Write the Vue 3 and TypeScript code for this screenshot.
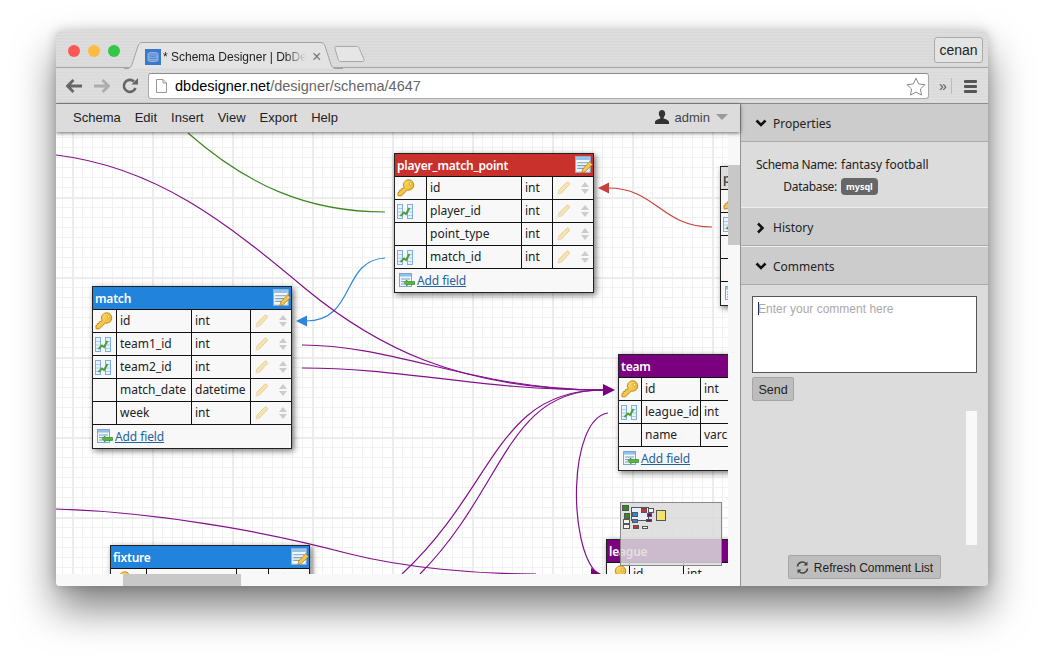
<template>
  <div class="page">
    <svg class="defs" width="0" height="0">
      <defs>
        <linearGradient id="key-fill" x1="0" y1="0" x2="1" y2="1">
          <stop offset="0%" stop-color="#ffe680" />
          <stop offset="100%" stop-color="#eba91c" />
        </linearGradient>
        <symbol id="key" viewBox="0 0 18 18">
          <path
            d="M12 .8a5.200 5.200 0 1 1-1.800 10.200L4.500 16.800H1v-3.200l1.200-.3.2-1.700 1.700-.2.2-1.600 3-.9A5.200 5.200 0 0 1 12 .8z"
            fill="url(#key-fill)"
            stroke="#c48a10"
            stroke-width="1"
          />
          <circle cx="13.500" cy="4.800" r="1.300" fill="#fff3b0" stroke="#c48a10" stroke-width=".6" />
        </symbol>
        <symbol id="fk" viewBox="0 0 16 15">
          <rect x=".5" y=".5" width="5" height="14" fill="#eaf3fd" stroke="#7db0e6" />
          <rect x="10.500" y=".5" width="5" height="14" fill="#eaf3fd" stroke="#7db0e6" />
          <path d="M1 4.500h4M1 8h4M1 11.500h4M11 4.500h4M11 8h4M11 11.500h4" stroke="#a9ccf0" />
          <path d="M3.500 12 7 8.500l2 1.500L12.500 4" fill="none" stroke="#4c9f38" stroke-width="2" />
        </symbol>
        <symbol id="edit" viewBox="0 0 16 16">
          <rect x=".5" y=".5" width="13" height="14" fill="#f2f7fc" stroke="#8fb0d4" />
          <rect x="1" y="1" width="12" height="2.500" fill="#8fc0ea" />
          <path d="M2 6h10M2 8.500h8M2 11h6" stroke="#7f9fbf" />
          <path d="M6 15l1-3.500L13 5l2.500 2.500L9 14z" fill="#f6c64e" stroke="#b07d16" stroke-width=".7" />
        </symbol>
        <symbol id="add" viewBox="0 0 16 15">
          <rect x=".5" y=".5" width="12" height="13" fill="#eef5fc" stroke="#7fa6cf" />
          <rect x="1" y="1" width="11" height="2.500" fill="#8fc0ea" />
          <path d="M2 6h9M2 8.500h4M2 11h4" stroke="#7f9fbf" />
          <path d="M5 9.500 8 7v1.500h7.500v3H8V13z" fill="#55b845" stroke="#2f8a25" stroke-width=".7" />
        </symbol>
        <symbol id="pencil" viewBox="0 0 14 14">
          <path d="M1 13l1-4 7.500-7.500c.8-.6 1.900-.5 2.500.2.600.7.600 1.600 0 2.300L4.500 12z" fill="#f6e4b0" stroke="#e0c88c" stroke-width=".8" />
          <path d="M1 13l1-4 2.500 3z" fill="#efe3cf" />
        </symbol>
      </defs>
    </svg>

    <div class="window">
      <div class="tabstrip">
        <div class="lights">
          <span class="light red"></span>
          <span class="light yellow"></span>
          <span class="light green"></span>
        </div>
        <div class="tab">
          <svg class="tab-shape" width="220" height="27" viewBox="0 0 220 27">
            <path d="M0 26.500h3c3 0 4-1.500 5-4L14 4c1-2.500 2-3.500 5-3.500h177c3 0 4 1 5 3.500l6 18.500c1 2.500 2 4 5 4h7" fill="#e3e3e3" stroke="#a3a3a3" />
          </svg>
          <svg class="favicon" width="16" height="16" viewBox="0 0 16 16">
            <rect width="16" height="16" fill="#3b78c9" />
            <path d="M3 4.500C3 3 13 3 13 4.500v7C13 13 3 13 3 11.500zM3 7c1 1.500 9 1.500 10 0M3 9.500c1 1.500 9 1.500 10 0" fill="#6d9bdb" stroke="#a9c6ee" stroke-width=".7" />
          </svg>
          <span class="tab-title">* Schema Designer | DbDesigner</span>
          <span class="tab-close">×</span>
        </div>
        <svg class="newtab" width="32" height="18" viewBox="0 0 32 18">
          <path d="M1.500 1.500h21c1.500 0 2.200.5 2.800 2L30 14.500c.4 1.200 0 2-1.500 2H7c-1.500 0-2.200-.6-2.800-2L.8 3c-.3-1 0-1.500.7-1.500z" fill="#e6e6e6" stroke="#a8a8a8" />
        </svg>
        <button class="user">cenan</button>
      </div>

      <div class="toolbar">
        <svg class="nav" width="16" height="14" viewBox="0 0 16 14">
          <path d="M7.500 1 1.500 7l6 6M2 7h14" fill="none" stroke="#666" stroke-width="2.800" />
        </svg>
        <svg class="nav" width="16" height="14" viewBox="0 0 16 14">
          <path d="M8.500 1l6 6-6 6M14 7H0" fill="none" stroke="#adadad" stroke-width="2.800" />
        </svg>
        <svg class="nav last" width="16" height="16" viewBox="0 0 16 16">
          <path d="M13.500 10A6 6 0 1 1 12 3.500" fill="none" stroke="#666" stroke-width="2.600" />
          <path d="M9.500 6.500H16V0z" fill="#666" />
        </svg>
        <div class="omnibox">
          <svg width="11" height="14" viewBox="0 0 11 14">
            <path d="M.5.500h6.500l3.500 3.500v9.500H.5zM7 .5V4h3.500" fill="#fff" stroke="#999" />
          </svg>
          <span class="url"><b>dbdesigner.net</b>/designer/schema/4647</span>
          <svg class="star" width="20" height="19" viewBox="0 0 20 19">
            <path d="M10 1.200l2.700 5.700 6.200.8-4.500 4.300 1.100 6.100L10 15.100l-5.500 3 1.100-6.100L1.100 7.700l6.200-.8z" fill="#fff" stroke="#888" />
          </svg>
        </div>
        <span class="more">»</span>
        <span class="divider"></span>
        <span class="burger"><i></i><i></i><i></i></span>
      </div>

      <div class="workspace">
        <div class="designer">
          <div class="menubar">
            <span v-for="item in menu" :key="item">{{ item }}</span>
            <span class="account">
              <svg width="14" height="14" viewBox="0 0 14 14">
                <path d="M7 0c2 0 3.200 1.500 3.200 3.600 0 1.700-.8 3-1.500 3.700v1.300c1.500.7 5.300 1.400 5.300 3.400v2H0v-2c0-2 3.800-2.700 5.300-3.400V7.300C4.600 6.600 3.800 5.300 3.800 3.600 3.800 1.500 5 0 7 0z" fill="#333" />
              </svg>
              admin
              <i class="caret"></i>
            </span>
          </div>

          <div class="viewport">
            <div class="canvas">
              <svg class="edges" width="672" height="442">
                <g fill="none" stroke-width="1.200">
                  <path d="M132 1C190 52 250 80 329 80" stroke="#3c8a1e" />
                  <path d="M656 95C605 95 600 56 552 56" stroke="#c9403a" />
                  <path d="M329 126C285 128 300 189 250 189" stroke="#2f86dc" />
                  <g stroke="#84108c">
                    <path d="M0 23C100 35 170 90 251 158C317 212 400 258 547 258" />
                    <path d="M246 213C340 213 420 258 547 258" />
                    <path d="M246 236C350 236 420 258 547 258" />
                    <path d="M346 442C440 355 440 258 547 258" />
                    <path d="M364 442C450 355 450 258 547 258" />
                    <path d="M552 281C512 287 512 415 541 441" />
                    <path d="M0 377C120 381 230 405 294 422C350 436 420 442 480 442" />
                  </g>
                </g>
                <path d="M240 189l11-5.500v11z" fill="#2f86dc" />
                <path d="M542 56l11-5.500v11z" fill="#c9403a" />
                <path d="M559 258l-12-6v12z" fill="#7b007f" />
                <path d="M545 442l-10-6v12z" fill="#7b007f" />
              </svg>

              <div
                v-for="t in tables"
                :key="t.name"
                class="node"
                :style="{ left: t.x + 'px', top: t.y + 'px', width: t.w + 'px' }"
              >
                <div class="node-head" :style="{ background: t.color, color: t.ink }">
                  <span>{{ t.name }}</span>
                  <svg class="edit-icon" width="18" height="18"><use href="#edit" /></svg>
                </div>
                <div
                  v-for="(f, i) in t.fields"
                  :key="i"
                  class="field"
                  :style="{ gridTemplateColumns: t.cols }"
                >
                  <div class="cell icon-cell">
                    <svg v-if="f.kind === 'key'" width="18" height="18"><use href="#key" /></svg>
                    <svg v-else-if="f.kind === 'fk'" width="16" height="15"><use href="#fk" /></svg>
                  </div>
                  <div class="cell">{{ f.name }}</div>
                  <div class="cell">{{ f.type }}</div>
                  <div class="cell actions">
                    <svg width="14" height="14"><use href="#pencil" /></svg>
                    <span class="updown"><i class="up"></i><i class="down"></i></span>
                  </div>
                </div>
                <div v-if="t.addField" class="add-field">
                  <svg width="16" height="15"><use href="#add" /></svg>
                  <a href="#">Add field</a>
                </div>
              </div>

              <div class="minimap">
                <i
                  v-for="(m, i) in minimap"
                  :key="i"
                  :style="{ left: m[0] + 'px', top: m[1] + 'px', width: m[2] + 'px', height: m[3] + 'px', background: m[4] }"
                ></i>
              </div>
            </div>
            <div class="vscroll"><div class="vthumb"></div></div>
            <div class="hscroll"><div class="hthumb"></div></div>
            <div class="corner"></div>
          </div>
        </div>

        <aside class="panel">
          <div class="panel-head">
            <svg width="12" height="9" viewBox="0 0 12 9"><path d="M1.500 1.500 6 6l4.500-4.500" fill="none" stroke="#111" stroke-width="2.600" /></svg>
            Properties
          </div>
          <div class="props">
            <div class="prop"><span class="prop-key">Schema Name:</span><span>fantasy football</span></div>
            <div class="prop"><span class="prop-key">Database:</span><span class="badge">mysql</span></div>
          </div>
          <div class="panel-head small">
            <svg width="12" height="12" viewBox="0 0 12 12"><path d="M3 1.500 7.500 6 3 10.500" fill="none" stroke="#111" stroke-width="2.600" /></svg>
            History
          </div>
          <div class="panel-head small">
            <svg width="12" height="9" viewBox="0 0 12 9"><path d="M1.500 1.500 6 6l4.500-4.500" fill="none" stroke="#111" stroke-width="2.600" /></svg>
            Comments
          </div>
          <div class="comments">
            <div class="textarea"><i class="text-caret"></i>Enter your comment here</div>
            <button class="btn send">Send</button>
            <div class="comment-list"><div class="comment-scroll"></div></div>
            <button class="btn refresh">
              <svg width="13" height="13" viewBox="0 0 13 13">
                <path d="M1.500 5.500A5 5 0 0 1 10 2.500M11.500 7.500A5 5 0 0 1 3 10.500" fill="none" stroke="#444" stroke-width="1.600" />
                <path d="M11.500 .5v4h-4zM1.500 12.500v-4h4z" fill="#444" />
              </svg>
              Refresh Comment List
            </button>
          </div>
        </aside>
      </div>
    </div>
  </div>
</template>

<script setup lang="ts">
interface Field {
  name: string
  type: string
  kind?: 'key' | 'fk'
}

interface Table {
  name: string
  x: number
  y: number
  w: number
  color: string
  ink: string
  cols: string
  fields: Field[]
  addField: boolean
}

const menu = ['Schema', 'Edit', 'Insert', 'View', 'Export', 'Help']

const BLUE = '#2183dc'
const PURPLE = '#7b007f'
const WHITE = '#fff'

const tables: Table[] = [
  {
    name: 'player',
    x: 664,
    y: 34,
    w: 200,
    color: '#dcdcdc',
    ink: '#444',
    cols: '32px 94px 31px 1fr',
    addField: true,
    fields: [
      { name: '', type: '', kind: 'key' },
      { name: '', type: '', kind: 'fk' },
      { name: '', type: '' },
      { name: '', type: '' }
    ]
  },
  {
    name: 'player_match_point',
    x: 338,
    y: 21,
    w: 200,
    color: '#c9322c',
    ink: WHITE,
    cols: '32px 95px 31px 1fr',
    addField: true,
    fields: [
      { name: 'id', type: 'int', kind: 'key' },
      { name: 'player_id', type: 'int', kind: 'fk' },
      { name: 'point_type', type: 'int' },
      { name: 'match_id', type: 'int', kind: 'fk' }
    ]
  },
  {
    name: 'match',
    x: 36,
    y: 154,
    w: 200,
    color: BLUE,
    ink: WHITE,
    cols: '24px 75px 59px 1fr',
    addField: true,
    fields: [
      { name: 'id', type: 'int', kind: 'key' },
      { name: 'team1_id', type: 'int', kind: 'fk' },
      { name: 'team2_id', type: 'int', kind: 'fk' },
      { name: 'match_date', type: 'datetime' },
      { name: 'week', type: 'int' }
    ]
  },
  {
    name: 'team',
    x: 562,
    y: 222,
    w: 200,
    color: PURPLE,
    ink: WHITE,
    cols: '23px 59px 59px 1fr',
    addField: true,
    fields: [
      { name: 'id', type: 'int', kind: 'key' },
      { name: 'league_id', type: 'int', kind: 'fk' },
      { name: 'name', type: 'varchar' }
    ]
  },
  {
    name: 'league',
    x: 550,
    y: 407,
    w: 200,
    color: PURPLE,
    ink: WHITE,
    cols: '23px 54px 59px 1fr',
    addField: false,
    fields: [{ name: 'id', type: 'int', kind: 'key' }]
  },
  {
    name: 'fixture',
    x: 54,
    y: 413,
    w: 200,
    color: BLUE,
    ink: WHITE,
    cols: '36px 90px 32px 1fr',
    addField: false,
    fields: [{ name: 'id', type: 'int', kind: 'key' }]
  }
]

// left, top, width, height, colour of the small boxes in the overview
const minimap: [number, number, number, number, string][] = [
  [1, 2, 7, 6, '#2e8a1e'],
  [3, 10, 6, 6, '#2e8a1e'],
  [2, 16, 7, 5, '#f4f4f4'],
  [2, 21, 7, 5, '#f4f4f4'],
  [10, 4, 18, 14, '#e8eef8'],
  [11, 9, 6, 5, '#2f86dc'],
  [11, 16, 6, 4, '#2f86dc'],
  [20, 5, 6, 5, '#c9322c'],
  [27, 5, 6, 5, '#f4f4f4'],
  [26, 10, 5, 4, '#7b007f'],
  [25, 16, 6, 3, '#7b007f'],
  [12, 22, 6, 4, '#c9322c'],
  [21, 23, 6, 3, '#f4f4f4'],
  [35, 7, 10, 11, '#f4e46f']
]
</script>

<style>
html,
body {
  margin: 0;
  background: #fff;
}
</style>

<style scoped>
.page {
  width: 1043px;
  height: 666px;
  padding: 31px 55px 0 56px;
  box-sizing: border-box;
  overflow: hidden;
  font-family: "Liberation Sans", Arial, sans-serif;
}

.defs {
  position: absolute;
}

.window {
  width: 932px;
  height: 555px;
  border-radius: 6px 6px 4px 4px;
  overflow: hidden;
  box-shadow: 0 22px 40px rgba(0, 0, 0, 0.5), 0 0 12px rgba(0, 0, 0, 0.2);
  display: flex;
  flex-direction: column;
  background: #ddd;
}

.tabstrip {
  height: 37px;
  flex: none;
  display: flex;
  align-items: flex-end;
  position: relative;
  box-sizing: border-box;
  background: repeating-linear-gradient(180deg, #dedede 0 1px, #d8d8d8 1px 2px, #dbdbdb 2px 3px);
  border-bottom: 1px solid #a3a3a3;
}

.lights {
  display: flex;
  gap: 8px;
  padding: 0 0 10px 12px;
  width: 64px;
  box-sizing: border-box;
}

.light {
  width: 12px;
  height: 12px;
  flex: none;
  border-radius: 50%;
}

.red {
  background: #fc5753;
}

.yellow {
  background: #fdbc40;
}

.green {
  background: #33c748;
}

.tab {
  width: 216px;
  height: 25px;
  margin-left: 10px;
  margin-bottom: -1px;
  padding: 2px 0 0 15px;
  box-sizing: border-box;
  position: relative;
  display: flex;
  align-items: center;
  gap: 2px;
  font-size: 12px;
  color: #222;
}

.tab-shape {
  position: absolute;
  left: -6px;
  top: -1px;
}

.favicon {
  position: relative;
  flex: none;
}

.tab-title {
  position: relative;
  width: 143px;
  overflow: hidden;
  white-space: nowrap;
  -webkit-mask-image: linear-gradient(90deg, #000 85%, transparent);
  mask-image: linear-gradient(90deg, #000 85%, transparent);
}

.tab-close {
  position: relative;
  margin-left: 4px;
  color: #777;
  font-size: 16px;
  line-height: 1;
}

.newtab {
  margin: 0 0 4px -12px;
}

.user {
  margin: 0 5px 4px auto;
  width: 49px;
  height: 26px;
  padding: 0;
  background: #e4e4e4;
  border: 1px solid #aaa;
  border-radius: 3px;
  font: 14px "Liberation Sans", Arial, sans-serif;
  color: #222;
}

.toolbar {
  height: 36px;
  flex: none;
  box-sizing: border-box;
  display: flex;
  align-items: center;
  padding: 1px 11px 0 10px;
  background: repeating-linear-gradient(180deg, #dfdfdf 0 1px, #dadada 1px 2px, #dcdcdc 2px 3px);
  border-bottom: 1px solid #8c8c8c;
}

.nav {
  flex: none;
  margin-right: 12px;
}

.nav.last {
  margin-right: 10px;
}

.omnibox {
  width: 781px;
  height: 26px;
  box-sizing: border-box;
  flex: none;
  display: flex;
  align-items: center;
  gap: 8px;
  padding: 0 2px 0 7px;
  background: #fff;
  border: 1px solid #a9a9a9;
  border-top-color: #8c8c8c;
  border-radius: 3px;
}

.url {
  flex: 1;
  font-size: 14.5px;
  color: #666;
}

.url b {
  font-weight: 400;
  color: #000;
}

.more {
  margin-left: 10px;
  font-size: 14px;
  color: #555;
}

.divider {
  width: 1px;
  height: 16px;
  margin-left: 4px;
  background: #bbb;
}

.burger {
  margin-left: 12px;
  display: flex;
  flex-direction: column;
  gap: 2px;
}

.burger i {
  display: block;
  width: 13px;
  height: 3px;
  background: #555;
  border-radius: 1px;
}

.workspace {
  flex: 1;
  min-height: 0;
  display: flex;
}

.designer {
  width: 684px;
  flex: none;
  display: flex;
  flex-direction: column;
}

.menubar {
  height: 28px;
  flex: none;
  display: flex;
  align-items: center;
  gap: 14px;
  padding: 0 12px 2px 17px;
  box-sizing: border-box;
  background: #dcdcdc;
  font-size: 13px;
  color: #222;
  position: relative;
  z-index: 2;
  box-shadow: 0 1px 4px rgba(0, 0, 0, 0.6);
}

.account {
  margin-left: auto;
  display: flex;
  align-items: center;
  gap: 6px;
  font-size: 13px;
  color: #444;
}

.caret {
  width: 0;
  height: 0;
  border: 6px solid transparent;
  border-top: 6px solid #999;
  border-bottom: 0;
  margin-left: 0;
}

.viewport {
  flex: 1;
  min-height: 0;
  display: grid;
  grid-template-columns: 672px 12px;
  grid-template-rows: 442px 12px;
}

.canvas {
  position: relative;
  overflow: hidden;
  background-color: #fff;
  background-image:
    linear-gradient(#ececec 2px, transparent 2px),
    linear-gradient(90deg, #ececec 2px, transparent 2px),
    linear-gradient(#f1f1f1 1px, transparent 1px),
    linear-gradient(90deg, #f1f1f1 1px, transparent 1px);
  background-size: 80px 80px, 80px 80px, 10px 10px, 10px 10px;
  background-position: 0 65px, 16px 0, 0 5px, 6px 0;
}

.edges {
  position: absolute;
  left: 0;
  top: 0;
  z-index: 1;
}

.node {
  position: absolute;
  z-index: 2;
  box-sizing: border-box;
  border: 1px solid #222;
  background: #f8f8f8;
  box-shadow: 2px 2px 6px rgba(0, 0, 0, 0.55);
  font-family: "Noto Sans", sans-serif;
  font-size: 12px;
  color: #222;
}

.node-head {
  height: 22px;
  display: flex;
  align-items: center;
  justify-content: space-between;
  padding: 0 0 0 2px;
  font-weight: 600;
  letter-spacing: -0.2px;
  white-space: nowrap;
}

.edit-icon {
  flex: none;
}

.field {
  height: 23px;
  box-sizing: border-box;
  display: grid;
  border-top: 1px solid #111;
}

.cell {
  box-sizing: border-box;
  border-right: 1px solid #111;
  padding-left: 3px;
  line-height: 22px;
  overflow: hidden;
  white-space: nowrap;
}

.icon-cell {
  padding: 0 0 0 2px;
  display: flex;
  align-items: center;
}

.actions {
  border-right: 0;
  display: flex;
  align-items: center;
  gap: 10px;
  padding-left: 4px;
}

.updown {
  display: flex;
  flex-direction: column;
  gap: 2px;
}

.updown i {
  width: 0;
  height: 0;
  border-left: 4px solid transparent;
  border-right: 4px solid transparent;
}

.updown .up {
  border-bottom: 5px solid #ccc;
}

.updown .down {
  border-top: 5px solid #ccc;
}

.add-field {
  height: 24px;
  box-sizing: border-box;
  border-top: 1px solid #111;
  display: flex;
  align-items: center;
  gap: 2px;
  padding-left: 4px;
}

.add-field a {
  color: #275f9e;
  letter-spacing: -0.1px;
}

.minimap {
  position: absolute;
  left: 564px;
  top: 370px;
  width: 102px;
  height: 64px;
  box-sizing: border-box;
  border: 1px solid #888;
  background: rgba(218, 218, 218, 0.85);
  z-index: 3;
}

.minimap i {
  position: absolute;
  box-sizing: border-box;
  border: 1px solid #555;
}

.vscroll {
  background: #f8f8f8;
}

.vthumb {
  height: 80px;
  margin-top: 33px;
  background: #c8c8c8;
}

.hscroll {
  background: #f8f8f8;
}

.hthumb {
  width: 118px;
  height: 12px;
  margin-left: 67px;
  background: #c8c8c8;
}

.corner {
  background: #f8f8f8;
}

.panel {
  flex: 1;
  min-width: 0;
  display: flex;
  flex-direction: column;
  border-left: 1px solid #949494;
  background: #dcdcdc;
  font-family: "Noto Sans", sans-serif;
  font-size: 12px;
  color: #222;
}

.panel-head {
  height: 38px;
  flex: none;
  box-sizing: border-box;
  display: flex;
  align-items: center;
  gap: 6px;
  padding: 2px 0 0 14px;
  background: #cccccc;
  border-bottom: 1px solid #aaa;
}

.panel-head.small {
  height: 39px;
  border-top: 1px solid #eee;
}

.props {
  height: 65px;
  flex: none;
  box-sizing: border-box;
  padding: 11px 0 0 14px;
}

.prop {
  height: 22px;
  display: flex;
  align-items: center;
  gap: 4px;
}

.prop-key {
  width: 82px;
  text-align: right;
  white-space: nowrap;
  letter-spacing: -0.3px;
}

.badge {
  background: #666;
  color: #fff;
  font-size: 9px;
  font-weight: 700;
  border-radius: 4px;
  padding: 2px 5px;
  line-height: 13px;
}

.comments {
  flex: 1;
  min-height: 0;
  display: flex;
  flex-direction: column;
  align-items: flex-start;
  padding: 11px 11px 7px;
  font-family: "Liberation Sans", Arial, sans-serif;
}

.textarea {
  width: 225px;
  height: 77px;
  flex: none;
  box-sizing: border-box;
  border: 1px solid #555;
  background: #fff;
  padding: 5px 5px;
  font-size: 12px;
  line-height: 14px;
  color: #aaa;
  display: flex;
}

.text-caret {
  width: 1px;
  height: 13px;
  background: #222;
  margin-right: -1px;
}

.btn {
  height: 24px;
  box-sizing: border-box;
  background: #bdbdbd;
  border: 1px solid #a5a5a5;
  border-radius: 2px;
  padding: 1px 0 0;
  font: 12px "Liberation Sans", Arial, sans-serif;
  color: #222;
}

.send {
  width: 42px;
  margin-top: 4px;
  flex: none;
  font-size: 12.5px;
}

.comment-list {
  flex: 1;
  align-self: stretch;
  display: flex;
  justify-content: flex-end;
  padding: 10px 0 10px;
}

.comment-scroll {
  width: 11px;
  background: #f8f8f8;
}

.refresh {
  width: 153px;
  margin-left: 36px;
  flex: none;
  display: flex;
  align-items: center;
  justify-content: center;
  gap: 5px;
}
</style>
